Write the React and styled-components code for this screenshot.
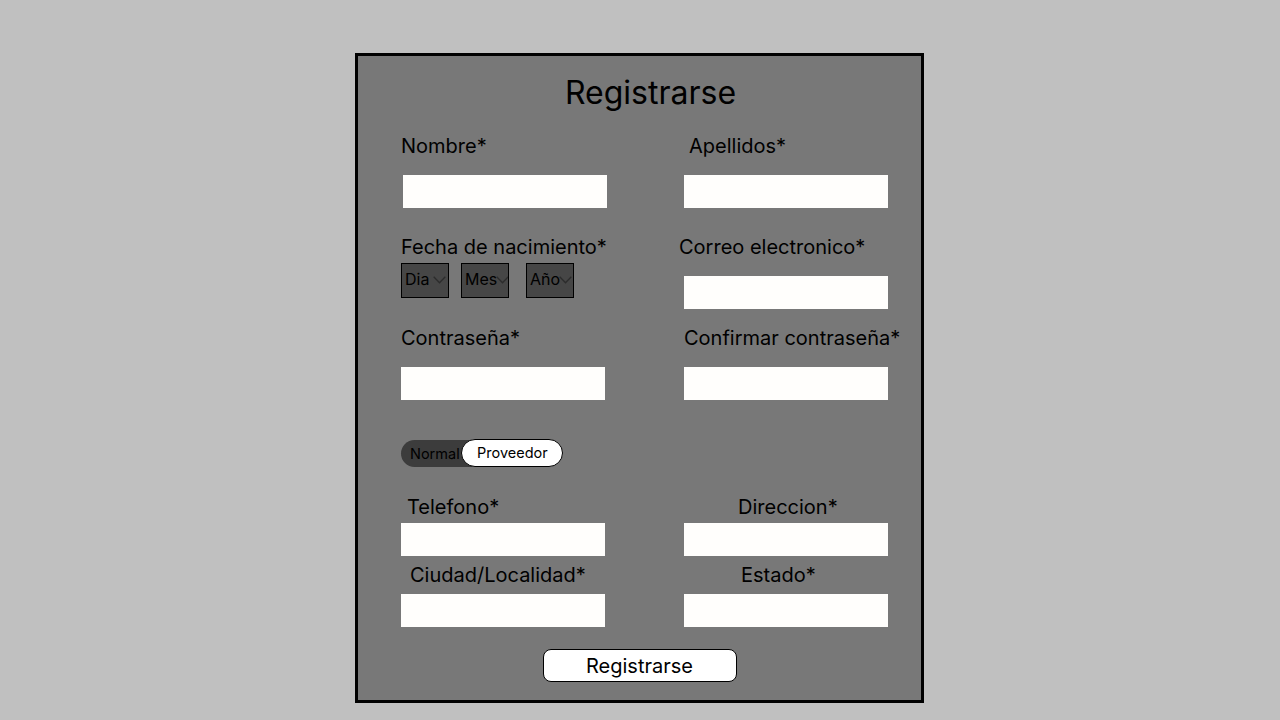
import React from "react";
import styled, { createGlobalStyle } from "styled-components";

const Global = createGlobalStyle`
  html, body { margin: 0; padding: 0; background: #c0c0c0; }
  body { font-family: Inter, "Noto Sans", sans-serif; color: #000; }
  * { box-sizing: border-box; }
`;

const Page = styled.div`
  width: 1280px;
  height: 720px;
  padding: 53px 0 0 355px;
  display: flex;
  align-items: flex-start;
`;

const Card = styled.form`
  width: 569px;
  height: 650px;
  border: 3px solid #000;
  background: #787878;
  padding: 18px 0 18px 43px;
  display: flex;
  flex-direction: column;
`;

const Title = styled.h1`
  margin: 0 0 0 -21px;
  font-size: 32px;
  font-weight: 400;
  line-height: 38px;
  text-align: center;
`;

const Row = styled.div`
  display: grid;
  grid-template-columns: 204px 204px;
  column-gap: 79px;
  align-items: start;
  margin-top: ${(p) => p.$mt}px;
`;

const Field = styled.div`
  display: flex;
  flex-direction: column;
  gap: ${(p) => p.$gap}px;
`;

const Label = styled.label`
  font-size: 20px;
  line-height: 24px;
  white-space: nowrap;
  margin-left: ${(p) => p.$indent || 0}px;
`;

const Input = styled.input`
  width: 204px;
  height: 33px;
  border: none;
  background: #fffefc;
  margin-left: ${(p) => p.$shift || 0}px;
  outline: none;
`;

const Selects = styled.div`
  display: flex;
  gap: ${(p) => p.$gap}px;
`;

const SelectBox = styled.div`
  width: 48px;
  height: 35px;
  border: 1px solid #000;
  background: #464646;
  display: flex;
  align-items: center;
  padding: 0 0 3px 3px;
  font-size: 16px;
  overflow: hidden;
  white-space: nowrap;
  margin-right: ${(p) => p.$mr || 0}px;
`;

const Chevron = styled.svg`
  flex: none;
  margin-left: ${(p) => p.$ml}px;
  margin-top: 2px;
`;

const Toggle = styled.div`
  display: flex;
  align-items: center;
  height: 28px;
  margin-top: 39px;
`;

const ToggleOff = styled.span`
  height: 27px;
  width: 74px;
  margin-right: -14px;
  margin-top: 1px;
  padding-left: 9px;
  background: #3c3c3c;
  border-radius: 14px 0 0 14px;
  font-size: 14.5px;
  line-height: 27px;
`;

const ToggleOn = styled.span`
  position: relative;
  height: 28px;
  width: 102px;
  background: #fff;
  border: 1px solid #000;
  border-radius: 14px;
  font-size: 14.5px;
  line-height: 26px;
  padding-left: 15px;
`;

const Button = styled.button`
  align-self: center;
  margin: 22px 0 0 -43px;
  width: 194px;
  height: 33px;
  border: 1px solid #000;
  border-radius: 8px;
  background: #fff;
  font-family: Inter, "Noto Sans", sans-serif;
  font-size: 20px;
  line-height: 31px;
  padding: 1px 0 0;
  color: #000;
`;

const Select = ({ text, ml, mr }) => (
  <SelectBox $mr={mr}>
    <span>{text}</span>
    <Chevron $ml={ml} width="13" height="8" viewBox="0 0 13 8">
      <path d="M0.7 0.7 L6.5 6.8 L12.3 0.7" fill="none" stroke="#2c2c2c" strokeWidth="1.3" />
    </Chevron>
  </SelectBox>
);

export default function App() {
  return (
    <>
      <Global />
      <Page>
        <Card onSubmit={(e) => e.preventDefault()}>
          <Title>Registrarse</Title>

          <Row $mt={22}>
            <Field $gap={17}>
              <Label>Nombre*</Label>
              <Input $shift={2} />
            </Field>
            <Field $gap={17}>
              <Label $indent={5}>Apellidos*</Label>
              <Input />
            </Field>
          </Row>

          <Row $mt={27}>
            <Field $gap={4}>
              <Label>Fecha de nacimiento*</Label>
              <Selects $gap={12}>
                <Select text="Dia" ml={4} />
                <Select text="Mes" ml={-1} mr={5} />
                <Select text="Año" ml={-1} />
              </Selects>
            </Field>
            <Field $gap={17}>
              <Label $indent={-5}>Correo electronico*</Label>
              <Input />
            </Field>
          </Row>

          <Row $mt={17}>
            <Field $gap={17}>
              <Label>Contraseña*</Label>
              <Input />
            </Field>
            <Field $gap={17}>
              <Label>Confirmar contraseña*</Label>
              <Input />
            </Field>
          </Row>

          <Toggle>
            <ToggleOff>Normal</ToggleOff>
            <ToggleOn>Proveedor</ToggleOn>
          </Toggle>

          <Row $mt={28}>
            <Field $gap={4}>
              <Label $indent={6}>Telefono*</Label>
              <Input />
            </Field>
            <Field $gap={4}>
              <Label $indent={54}>Direccion*</Label>
              <Input />
            </Field>
          </Row>

          <Row $mt={7}>
            <Field $gap={7}>
              <Label $indent={9}>Ciudad/Localidad*</Label>
              <Input />
            </Field>
            <Field $gap={7}>
              <Label $indent={57}>Estado*</Label>
              <Input />
            </Field>
          </Row>

          <Button type="submit">Registrarse</Button>
        </Card>
      </Page>
    </>
  );
}
